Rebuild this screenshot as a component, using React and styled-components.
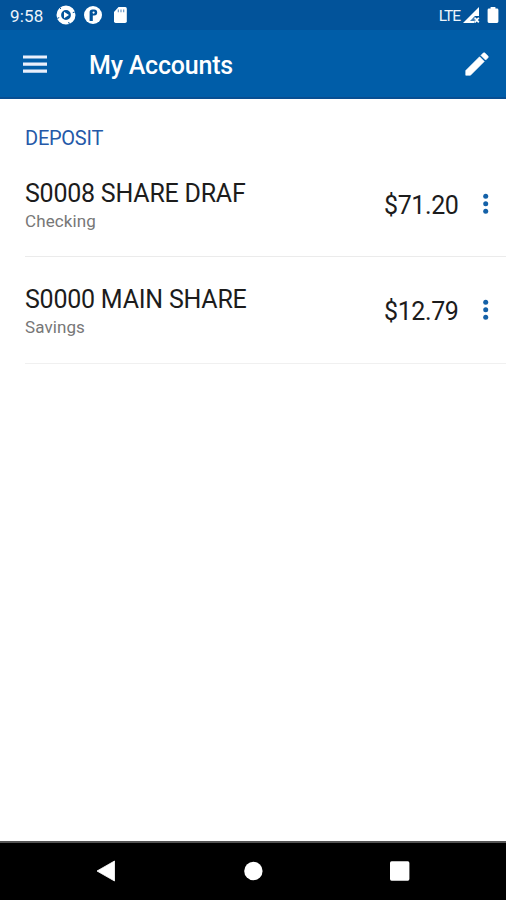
import React from "react";
import styled, { createGlobalStyle } from "styled-components";

const GlobalStyle = createGlobalStyle`
  * { box-sizing: border-box; }
  body { margin: 0; background: #fff; font-family: Roboto, "Noto Sans", sans-serif; }
`;

const Screen = styled.div`
  display: flex;
  flex-direction: column;
  width: 100%;
  height: 100vh;
  overflow: hidden;
  background: #fff;
`;

const StatusBar = styled.div`
  display: flex;
  flex: none;
  align-items: center;
  height: 30px;
  padding: 0 7px 0 10px;
  background: #02539a;
  color: #eef4fb;
`;

const Clock = styled.span`
  width: 46px;
  padding-top: 2px;
  font-size: 17px;
  line-height: 20px;
  letter-spacing: 0.2px;
`;

const StatusIcons = styled.div`
  display: flex;
  flex: 1;
  align-items: center;
  gap: 8px;
`;

const Network = styled.span`
  padding-top: 1px;
  font-size: 15.5px;
  line-height: 20px;
  letter-spacing: -1px;
  margin-right: 3px;
`;

const Icon = styled.svg`
  display: block;
  flex: none;
  margin-right: ${(p) => p.$gap || 0}px;
`;

const Toolbar = styled.header`
  display: flex;
  flex: none;
  align-items: center;
  height: 69px;
  padding: 0 14px 0 23px;
  background: #005da8;
  border-bottom: 2px solid #084e92;
  color: #fff;
`;

const Title = styled.h1`
  flex: 1;
  margin: 0 0 0 42px;
  padding-top: 4px;
  font-size: 25px;
  font-weight: 500;
  line-height: 30px;
  letter-spacing: -0.2px;
`;

const IconButton = styled.button`
  display: flex;
  padding: 0;
  border: 0;
  background: none;
  color: inherit;
`;

const Content = styled.main`
  flex: 1;
  padding: 25px 0 0 25px;
`;

const SectionTitle = styled.h2`
  margin: 0;
  height: 26px;
  color: #2459a8;
  font-size: 20px;
  font-weight: 400;
  line-height: 28px;
  letter-spacing: -0.25px;
`;

const AccountRow = styled.div`
  display: flex;
  align-items: center;
  height: 107px;
  padding: 2px 17px 0 0;
  border-bottom: 1px solid #ebebeb;

  &:last-child {
    padding-top: 0;
    border-bottom-color: #f0f0f0;
  }
`;

const AccountInfo = styled.div`
  flex: 1;
  padding-top: 3px;
`;

const AccountName = styled.div`
  color: #1c1c1c;
  font-size: 25px;
  line-height: 30px;
  letter-spacing: -0.23px;
`;

const AccountType = styled.div`
  color: #777;
  font-size: 17px;
  line-height: 24px;
  letter-spacing: 0.1px;
`;

const Balance = styled.div`
  padding-top: 3px;
  color: #1c1c1c;
  width: 98px;
  font-size: 25px;
  line-height: 30px;
  letter-spacing: -0.4px;
`;

const NavBar = styled.nav`
  display: flex;
  flex: none;
  align-items: center;
  justify-content: space-between;
  height: 59px;
  padding: 0 96px 2px;
  border-top: 2px solid #555;
  background: #000;
  color: #fff;
`;

const accounts = [
  { name: "S0008 SHARE DRAF", type: "Checking", balance: "$71.20" },
  { name: "S0000 MAIN SHARE", type: "Savings", balance: "$12.79" },
];

function StatusArea() {
  return (
    <StatusBar>
      <Clock>9:58</Clock>
      <StatusIcons>
        <Icon width="20" height="20" viewBox="0 0 20 20">
          <circle cx="10" cy="10" r="7.2" fill="none" stroke="#fff" strokeWidth="4.6" />
          <path d="M8 6.8v6.4l5-3.2z" fill="#fff" />
          <path d="M3.6 2.6 5 4M18.8 7l-2 .6M13.4 19l-.8-2M1.2 13.4l2-.8" stroke="#02539a" strokeWidth="1" />
        </Icon>
        <Icon width="18" height="18" viewBox="0 0 18 18">
          <circle cx="9" cy="9" r="9" fill="#fff" />
          <path d="M5.6 15V6.2Q5.6 3.6 8.4 3.6h1.8a3 3 0 0 1 0 6H8.8V15z" fill="#02539a" />
          <circle cx="9.6" cy="6.6" r="1.1" fill="#fff" />
        </Icon>
        <Icon width="20" height="18" viewBox="0 0 20 18">
          <path d="M8.5 1h6.8q1.5 0 1.5 1.7v12.6q0 1.7-1.7 1.7H5.7Q4 17 4 15.3V6z" fill="#fff" />
          <path d="M8.3 3.6v2.6M11 3.6v2.6M13.7 3.6v2.6" stroke="#5c8fc0" strokeWidth="1.1" />
        </Icon>
      </StatusIcons>
      <Network>LTE</Network>
      <Icon $gap={7} width="17" height="17" viewBox="0 0 17 17">
        <path d="M0 16 16 0v9h-4.5v7z" fill="#fff" />
        <path d="M7 14 11.3 9.6V14z" fill="#02539a" opacity=".75" />
        <path d="m11.8 10.8 4 4.6m0-4.6-4 4.6" stroke="#fff" strokeWidth="1.7" />
      </Icon>
      <Icon width="12" height="18" viewBox="0 0 12 18">
        <path d="M3.6 1h4.8v1.6H10q1.4 0 1.4 1.4v11.6Q11.4 17 10 17H2Q.6 17 .6 15.6V4Q.6 2.6 2 2.6h1.6z" fill="#fff" />
      </Icon>
    </StatusBar>
  );
}

function Account({ name, type, balance }) {
  return (
    <AccountRow>
      <AccountInfo>
        <AccountName>{name}</AccountName>
        <AccountType>{type}</AccountType>
      </AccountInfo>
      <Balance>{balance}</Balance>
      <IconButton aria-label="Account options">
        <Icon width="7" height="22" viewBox="0 0 7 22">
          <g fill="#1461a8">
            <circle cx="3.7" cy="3.3" r="2.5" />
            <circle cx="3.7" cy="10.8" r="2.5" />
            <circle cx="3.7" cy="18.2" r="2.5" />
          </g>
        </Icon>
      </IconButton>
    </AccountRow>
  );
}

export default function App() {
  return (
    <Screen>
      <GlobalStyle />
      <StatusArea />
      <Toolbar>
        <IconButton aria-label="Menu">
          <Icon width="24" height="18" viewBox="0 0 24 18">
            <path d="M0 2h24M0 9.2h24M0 16.2h24" stroke="#e9effb" strokeWidth="3.2" />
          </Icon>
        </IconButton>
        <Title>My Accounts</Title>
        <IconButton aria-label="Edit">
          <Icon width="30" height="30" viewBox="0 0 24 24">
            <path
              d="M3 17.25V21h3.75L17.81 9.94l-3.75-3.75L3 17.25zM20.71 7.04a1 1 0 0 0 0-1.41l-2.34-2.34a1 1 0 0 0-1.41 0l-1.83 1.83 3.75 3.75 1.83-1.83z"
              fill="#fff"
              stroke="#fff"
              strokeWidth=".5"
              strokeLinejoin="round"
            />
          </Icon>
        </IconButton>
      </Toolbar>
      <Content>
        <SectionTitle>DEPOSIT</SectionTitle>
        {accounts.map((account) => (
          <Account key={account.name} {...account} />
        ))}
      </Content>
      <NavBar>
        <Icon width="19" height="22" viewBox="0 0 19 22">
          <path d="M18.5 1v20L1 11z" fill="#fff" stroke="#fff" strokeWidth=".8" strokeLinejoin="round" />
        </Icon>
        <Icon width="20" height="20" viewBox="0 0 20 20">
          <circle cx="10.4" cy="10" r="9.2" fill="#fff" />
        </Icon>
        <Icon width="20" height="20" viewBox="0 0 20 20">
          <rect x="0" y=".3" width="19.4" height="19.4" rx="1.6" fill="#fff" />
        </Icon>
      </NavBar>
    </Screen>
  );
}
